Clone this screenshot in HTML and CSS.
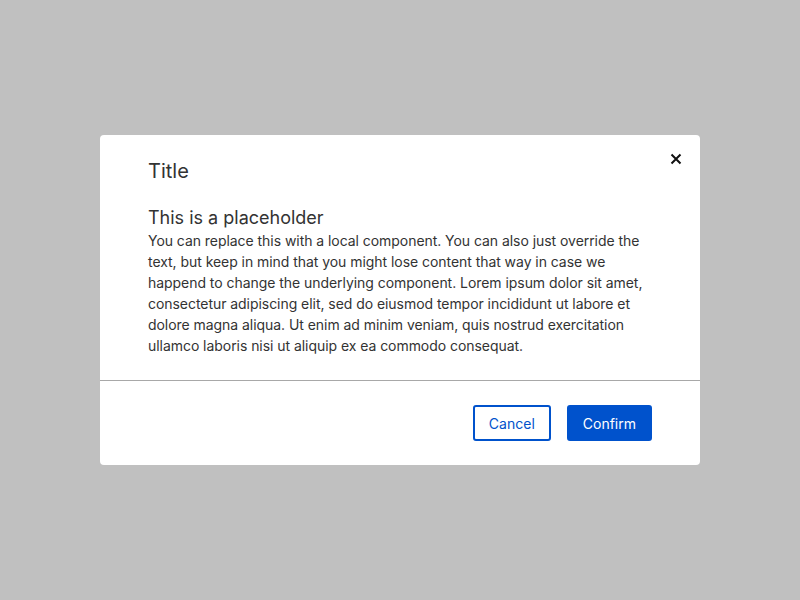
FILE: index.html
```html
<!DOCTYPE html>
<html>
<head>
<meta charset="utf-8">
<link rel="stylesheet" href="styles.css">
</head>
<body>
<div class="overlay">
  <div class="modal">
    <button class="close" aria-label="Close">
      <svg width="16" height="16" viewBox="0 0 16 16"><path d="M3.5 3.5L12.5 12.5M12.5 3.5L3.5 12.5" stroke="#111" stroke-width="2" fill="none"/></svg>
    </button>
    <div class="body">
      <h1 class="title">Title</h1>
      <h2 class="subtitle">This is a placeholder</h2>
      <p class="text">You can replace this with a local component. You can also just override the text, but keep in mind that you might lose content that way in case we happend to change the underlying component. Lorem ipsum dolor sit amet, consectetur adipiscing elit, sed do eiusmod tempor incididunt ut labore et dolore magna aliqua. Ut enim ad minim veniam, quis nostrud exercitation ullamco laboris nisi ut aliquip ex ea commodo consequat.</p>
    </div>
    <div class="footer">
      <button class="btn btn-secondary">Cancel</button>
      <button class="btn btn-primary">Confirm</button>
    </div>
  </div>
</div>
</body>
</html>
```
FILE: styles.css
```css
html, body { margin: 0; padding: 0; }
body {
  background: #c0c0c0;
  font-family: Inter, "Liberation Sans", sans-serif;
  color: #333;
}
.overlay {
  width: 800px;
  height: 600px;
  display: flex;
  align-items: center;
  justify-content: center;
}
.modal {
  position: relative;
  width: 600px;
  background: #fff;
  border-radius: 4px;
  box-sizing: border-box;
}
.close {
  position: absolute;
  top: 16px;
  right: 16px;
  width: 16px;
  height: 16px;
  padding: 0;
  border: 0;
  background: none;
  display: flex;
  cursor: pointer;
}
.body {
  padding: 22px 48px 24px;
  border-bottom: 1px solid #a8a8a8;
}
.title {
  margin: 0;
  font-size: 20px;
  line-height: 28px;
  font-weight: 400;
  color: #333;
}
.subtitle {
  margin: 21px 0 0;
  font-size: 18px;
  line-height: 24px;
  font-weight: 400;
  color: #333;
}
.text {
  margin: 0;
  font-size: 14px;
  line-height: 21px;
  letter-spacing: -0.05px;
  color: #333;
}
.footer {
  display: flex;
  justify-content: flex-end;
  gap: 16px;
  padding: 24px 48px;
}
.btn {
  height: 36px;
  padding: 0 14px;
  font-family: inherit;
  font-size: 14px;
  border-radius: 3px;
  border: 2px solid #0052cc;
  cursor: pointer;
}
.btn-secondary {
  background: #fff;
  color: #0052cc;
}
.btn-primary {
  background: #0052cc;
  color: #fff;
}
```
